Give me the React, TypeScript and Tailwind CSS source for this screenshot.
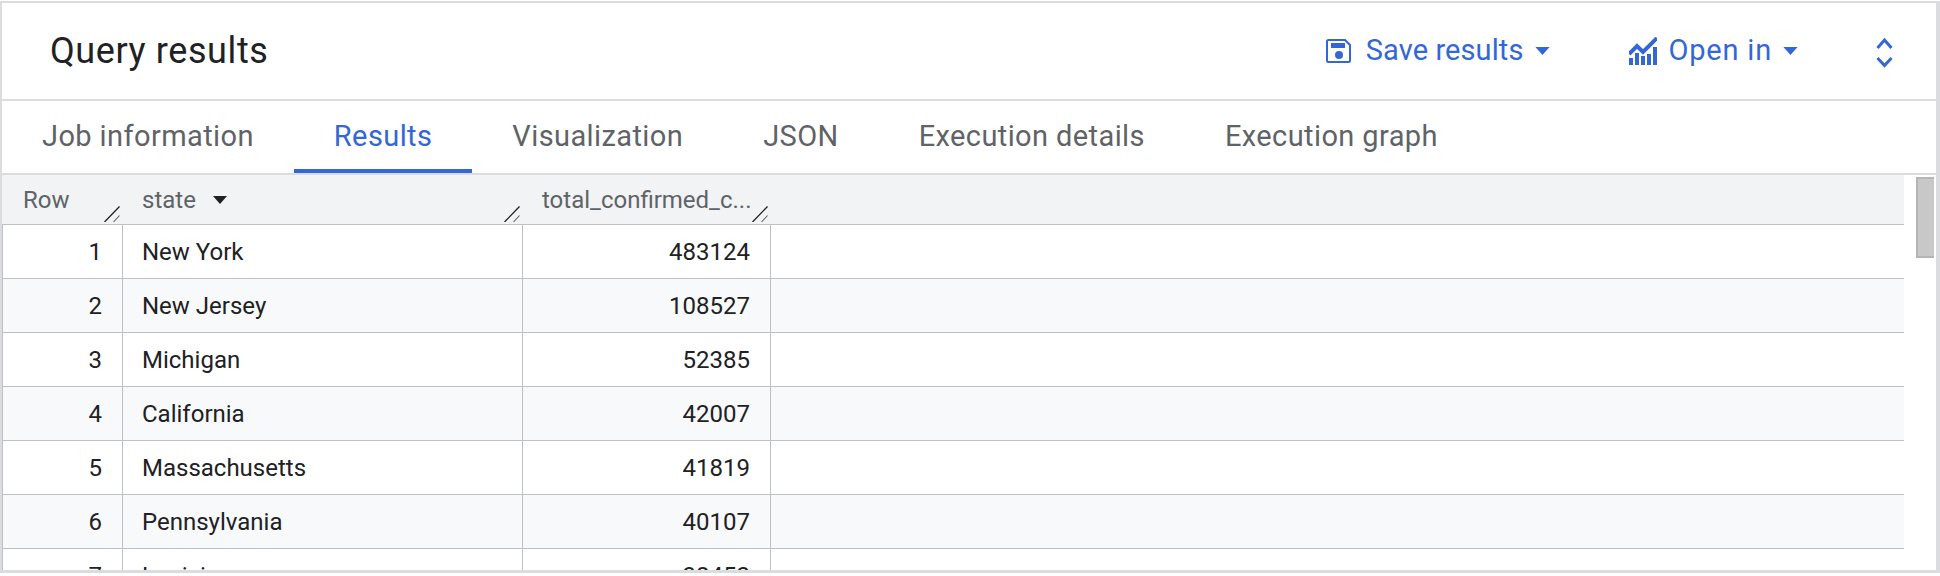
const rows = [
  [1, "New York", "483124"],
  [2, "New Jersey", "108527"],
  [3, "Michigan", "52385"],
  [4, "California", "42007"],
  [5, "Massachusetts", "41819"],
  [6, "Pennsylvania", "40107"],
  [7, "Louisiana", "38452"],
];

const tabs = ["Job information", "Results", "Visualization", "JSON", "Execution details", "Execution graph"];

function Caret({ className }: { className: string }) {
  return (
    <svg viewBox="0 0 16 9" className={className} fill="currentColor">
      <path d="M0 0h16L8 9z" />
    </svg>
  );
}

function ResizeHandle() {
  return (
    <svg viewBox="0 0 16 16" className="absolute right-[3px] bottom-[2px] w-4 h-4">
      <path d="M0.5 16 L15.5 0.5" stroke="#202124" strokeWidth="1.3" />
      <path d="M9.5 16 L15.5 9.5" stroke="#5f6368" strokeWidth="1.1" />
    </svg>
  );
}

export default function App() {
  return (
    <div className="w-[1940px] h-[576px] bg-white overflow-hidden font-['Roboto',sans-serif] pt-[1px]">
      <div className="h-[572px] border-t-2 border-l-2 border-r-4 border-b-[3px] border-[#dadce0] flex flex-col overflow-hidden">
        <div className="h-[98px] shrink-0 border-b-2 border-[#dadce0] flex items-center pl-[48px]">
          <h1 className="text-[36px] text-[#202124] flex-1 tracking-[0.6px]">Query results</h1>
          <div className="flex items-center text-[#3367d6] text-[29px]">
            <svg viewBox="0 0 25 24" className="w-[25px] h-[24px] mr-[15px]" fill="none">
              <path d="M2.5 1h16.5l5 5v15.5a1.5 1.5 0 0 1-1.5 1.5H2.5A1.5 1.5 0 0 1 1 21.5v-19A1.5 1.5 0 0 1 2.5 1z" stroke="currentColor" strokeWidth="2" />
              <rect x="5" y="4" width="14" height="5" fill="currentColor" />
              <circle cx="13" cy="16" r="4" fill="currentColor" />
            </svg>
            <span className="tracking-[0.1px]">Save results</span>
            <Caret className="w-[15px] h-[8px] ml-[11px]" />
            <svg viewBox="0 0 28 28" className="w-[28px] h-[28px] ml-[79px] mr-[12px]" fill="currentColor">
              <path d="M0 17L8 9l6 6L28 1" fill="none" stroke="currentColor" strokeWidth="4" />
              <path d="M0 28v-7h4v7zM6 28V16h4v12zM12 28v-9h4v9zM18 28V17h4v11zM24 28V10h4v18z" />
            </svg>
            <span className="tracking-[0.8px]">Open in</span>
            <Caret className="w-[15px] h-[8px] ml-[11px]" />
            <svg viewBox="0 0 17 31" className="w-[17px] h-[31px] ml-[78px] mr-[43px] mt-[3px]" fill="none" stroke="currentColor" strokeWidth="3">
              <path d="M1.5 11L8.5 3l7 8" />
              <path d="M1.5 21l7 7.5 7-7.5" />
            </svg>
          </div>
        </div>
        <div className="h-[74px] shrink-0 border-b-2 border-[#dadce0] flex text-[29px] tracking-[0.4px] text-[#5f6368]">
          {tabs.map((tab) => (
            <div
              key={tab}
              className={
                tab === "Results"
                  ? "h-full px-[40px] flex items-center text-[#3367d6] border-y-4 border-t-transparent border-b-[#3367d6]"
                  : "h-full px-[40px] flex items-center"
              }
            >
              {tab}
            </div>
          ))}
        </div>
        <div className="flex flex-1 min-h-0">
          <div className="w-[1902px] text-[24px] text-[#202124] overflow-hidden">
            <div className="h-[50px] bg-[#f1f3f4] border-b border-[#bdc1c6] flex text-[#5f6368]">
              <div className="relative w-[121px] pl-[21px] flex items-center">Row<ResizeHandle /></div>
              <div className="relative w-[400px] pl-[19px] flex items-center">
                state
                <Caret className="w-[14px] h-[8px] ml-[17px] text-[#202124]" />
                <ResizeHandle />
              </div>
              <div className="relative w-[248px] pl-[19px] flex items-center whitespace-nowrap">total_confirmed_c...<ResizeHandle /></div>
            </div>
            {rows.map(([n, state, total], i) => (
              <div key={n} className={i % 2 === 0 ? "h-[54px] bg-white border-b border-l border-[#bdc1c6] flex" : "h-[54px] bg-[#f8f9fa] border-b border-l border-[#bdc1c6] flex"}>
                <div className="w-[120px] border-r border-[#bdc1c6] flex items-center justify-end pr-[20px]">{n}</div>
                <div className="w-[400px] border-r border-[#bdc1c6] flex items-center pl-[19px]">{state}</div>
                <div className="w-[248px] border-r border-[#bdc1c6] flex items-center justify-end pr-[20px]">{total}</div>
              </div>
            ))}
          </div>
          <div className="flex-1 pl-[12px] pr-[2px] pt-[2px]">
            <div className="h-[81px] bg-[#c8c8c8] border-l-2 border-y-2 border-[#b5b5b5]" />
          </div>
        </div>
      </div>
    </div>
  );
}
